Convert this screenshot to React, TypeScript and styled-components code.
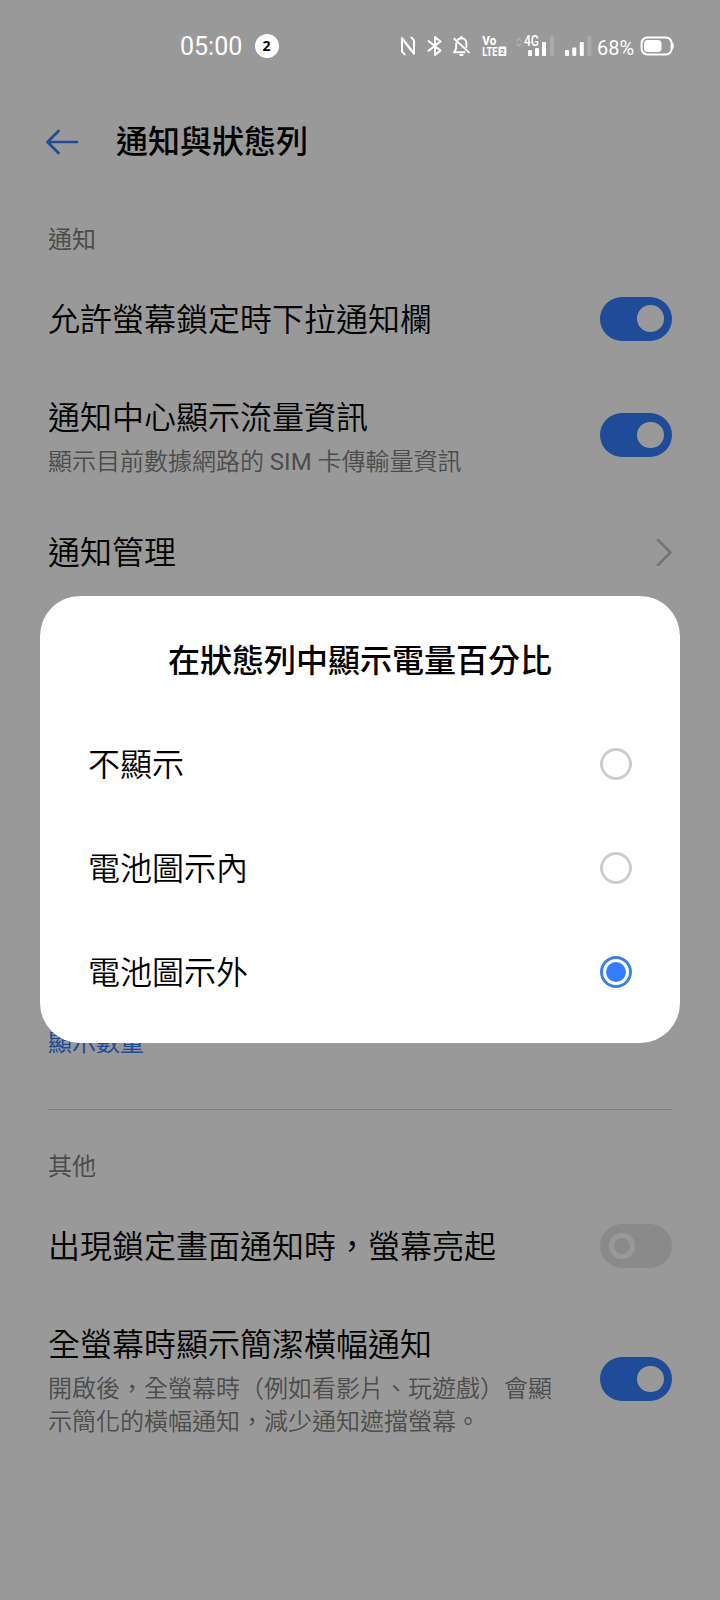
import React from "react";
import styled, { createGlobalStyle } from "styled-components";

const GlobalStyle = createGlobalStyle`
  * { box-sizing: border-box; }
  html, body { margin: 0; padding: 0; background: #fff; }
  body { font-family: Roboto, "Noto Sans CJK TC", sans-serif; color: #000; }
`;

const Screen = styled.div`
  position: relative;
  width: 720px;
  height: 1600px;
  overflow: hidden;
  background: #fff;
`;

const StatusBar = styled.header`
  position: relative;
  z-index: 2;
  display: flex;
  align-items: center;
  height: 92px;
  padding: 0 45px 0 180px;
  color: #fff;
`;

const Clock = styled.span`
  width: 74.5px;
  padding-top: 2px;
  font-size: 25px;
  line-height: 30px;
`;

const CountBadge = styled.span`
  display: flex;
  align-items: center;
  justify-content: center;
  width: 24px;
  height: 24px;
  margin-right: auto;
  border-radius: 50%;
  background: #fff;
  color: #000;
  font: 700 14px/24px "Open Sans", sans-serif;
`;

const StatusIcons = styled.div`
  display: flex;
  align-items: center;
  height: 22px;
`;

const StatusIcon = styled.svg<{ $gap?: number }>`
  display: block;
  flex: none;
  overflow: visible;
  margin-left: ${({ $gap = 0 }) => $gap}px;
`;

const BatteryLevel = styled.span`
  width: 38px;
  margin: 3px 0 0 5px;
  font-size: 20px;
  line-height: 24px;
`;

const TitleBar = styled.div`
  display: flex;
  align-items: center;
  gap: 37px;
  height: 98px;
  padding-left: 45px;
`;

const PageTitle = styled.h1`
  margin: 0;
  padding-top: 2px;
  font-size: 32px;
  line-height: 44px;
  font-weight: 500;
`;

const Section = styled.section`
  padding: 0 48px;
`;

const SectionLabel = styled.h2<{ $top: number; $bottom: number }>`
  margin: 0;
  padding: ${({ $top, $bottom }) => `${$top}px 0 ${$bottom}px`};
  font-size: 24px;
  line-height: 36px;
  font-weight: 400;
  color: #808080;
`;

const SettingRow = styled.div<{ $height: number }>`
  display: flex;
  align-items: center;
  justify-content: space-between;
  height: ${({ $height }) => $height}px;
`;

const SettingText = styled.div`
  display: flex;
  flex-direction: column;
  gap: 6px;
  max-width: 510px;
  padding-top: 2px;
`;

const SettingTitle = styled.span`
  padding-top: 2px;
  font-size: 32px;
  line-height: 44px;
  font-weight: 350;
  white-space: nowrap;
`;

const SettingNote = styled.span`
  font-size: 24px;
  line-height: 33px;
  font-weight: 350;
  color: #808080;
`;

const Latin = styled.span`
  font-weight: 400;
`;

const Track = styled.span<{ $on: boolean }>`
  display: flex;
  flex: none;
  align-items: center;
  justify-content: ${({ $on }) => ($on ? "flex-end" : "flex-start")};
  width: 72px;
  height: 44px;
  padding: 0 8.5px;
  border-radius: 22px;
  background: ${({ $on }) => ($on ? "#347dff" : "#e6e6e6")};
`;

const Knob = styled.span<{ $on: boolean }>`
  width: 26.5px;
  height: 26.5px;
  border: ${({ $on }) => ($on ? 0 : "5px solid #fff")};
  border-radius: 50%;
  background: ${({ $on }) => ($on ? "#fff" : "#e6e6e6")};
`;

const TextLink = styled.a`
  display: block;
  margin-top: 427px;
  font-size: 24px;
  line-height: 36px;
  color: #347dff;
`;

const Divider = styled.hr`
  height: 1px;
  margin: 48px 0 0;
  border: 0;
  background: #d4d4d4;
`;

const Scrim = styled.div`
  position: absolute;
  inset: 0;
  display: flex;
  justify-content: center;
  align-items: flex-start;
  padding-top: 596px;
  background: rgba(0, 0, 0, 0.4);
`;

const Dialog = styled.div`
  width: 640px;
  height: 447px;
  padding: 43px 48px 0;
  border-radius: 40px;
  background: #fff;
`;

const DialogTitle = styled.h2`
  margin: 0 0 29px;
  font-size: 32px;
  line-height: 44px;
  font-weight: 500;
  text-align: center;
`;

const Option = styled.div`
  display: flex;
  align-items: center;
  justify-content: space-between;
  height: 104px;
  font-size: 32px;
  line-height: 44px;
  font-weight: 350;
`;

const OptionLabel = styled.span`
  padding-top: 2px;
`;

const Radio = styled.span<{ $checked: boolean }>`
  display: flex;
  align-items: center;
  justify-content: center;
  width: 32px;
  height: 32px;
  border: 3px solid ${({ $checked }) => ($checked ? "#3f80e2" : "#cdcdcd")};
  border-radius: 50%;

  &::after {
    content: "";
    width: 20px;
    height: 20px;
    border-radius: 50%;
    background: ${({ $checked }) => ($checked ? "#347dff" : "transparent")};
  }
`;

const Switch = ({ on }: { on: boolean }) => (
  <Track $on={on}>
    <Knob $on={on} />
  </Track>
);

const SignalBars = ({ gap }: { gap: number }) => (
  <StatusIcon $gap={gap} width="27" height="22" viewBox="0 0 27 22" fill="#fff">
    <rect x="0" y="15" width="4" height="6" rx="1" />
    <rect x="7.3" y="12.5" width="4" height="8.5" rx="1" />
    <rect x="14.8" y="7" width="4" height="14" rx="1" />
    <rect x="22.3" y="1" width="4" height="20" rx="1" opacity="0.18" />
  </StatusIcon>
);

const options = ["不顯示", "電池圖示內", "電池圖示外"];

export default function App() {
  return (
    <Screen lang="zh-Hant">
      <GlobalStyle />
      <StatusBar>
        <Clock>05:00</Clock>
        <CountBadge>2</CountBadge>
        <StatusIcons>
          <StatusIcon width="17" height="22" viewBox="0 0 17 22" fill="none" stroke="#fff" strokeWidth="2" strokeLinecap="round" strokeLinejoin="round">
            <path d="M4.6 19.3 L2 16.8 V3.2 L12 16.2" />
            <path d="M11.4 2.6 L14 5.2 V18.8 L4 5.8" />
          </StatusIcon>
          <StatusIcon $gap={10} width="16" height="22" viewBox="0 0 16 22" fill="none" stroke="#fff" strokeWidth="2" strokeLinejoin="round" strokeLinecap="round">
            <path d="M1.5 6 L13.5 15.5 L8 20 V2 L13.5 6.5 L1.5 15.8" />
          </StatusIcon>
          <StatusIcon $gap={9} width="19" height="22" viewBox="0 0 19 22" fill="none" stroke="#fff" strokeWidth="1.9" strokeLinecap="round" strokeLinejoin="round">
            <path d="M5.4 5.2 C6.3 4 7.8 3.3 9.4 3.3 C12.3 3.3 14.4 5.4 14.4 8.5 V12 M12.6 17.2 H2 C3.6 15.6 4.2 14.2 4.2 12 V8.2" />
            <path d="M2.2 3.8 L17 17.4" />
            <path d="M9.4 1.8 V3 M8.3 20 H10.6" />
          </StatusIcon>
          <StatusIcon $gap={11} width="25" height="22" viewBox="0 0 25 22" fill="#fff" fontFamily="Roboto, sans-serif" fontWeight="800">
            <text x="0.3" y="10" fontSize="12.5" textLength="14" lengthAdjust="spacingAndGlyphs">Vo</text>
            <text x="0.3" y="21" fontSize="13" textLength="15.2" lengthAdjust="spacingAndGlyphs">LTE</text>
            <rect x="16.5" y="11.5" width="7.8" height="9.5" rx="1" />
            <text x="18.2" y="19.2" fontSize="8" fill="#888">2</text>
          </StatusIcon>
          <StatusIcon $gap={9} width="38" height="22" viewBox="0 0 38 22" fill="#fff">
            <path d="M0.8 6 L3 3.5 L5.2 6 M0.8 8.5 L3 11 L5.2 8.5" fill="none" stroke="#fff" strokeWidth="1.5" opacity="0.22" />
            <text x="8" y="11.2" fontSize="14" fontWeight="500" fontFamily="Roboto, sans-serif" textLength="15" lengthAdjust="spacingAndGlyphs">4G</text>
            <rect x="12" y="15" width="4" height="6" rx="1" />
            <rect x="19" y="13" width="4" height="8" rx="1" />
            <rect x="26" y="7" width="4" height="14" rx="1" />
            <rect x="34" y="1" width="4" height="20" rx="1" opacity="0.18" />
          </StatusIcon>
          <SignalBars gap={11} />
          <BatteryLevel>68%</BatteryLevel>
          <StatusIcon $gap={5} width="35" height="22" viewBox="0 0 35 22">
            <rect x="1.6" y="2.6" width="30" height="16.8" rx="5.5" fill="none" stroke="#fff" strokeWidth="2" />
            <rect x="4" y="5" width="17.5" height="12" rx="3.5" fill="#fff" />
            <path d="M32 7.5 C34.4 8.4 34.4 13.6 32 14.5 Z" fill="#fff" />
          </StatusIcon>
        </StatusIcons>
      </StatusBar>

      <TitleBar>
        <svg width="34" height="28" viewBox="0 0 34 28" fill="none" stroke="#347dff" strokeWidth="2.7" strokeLinecap="round" strokeLinejoin="round">
          <path d="M32 15 H2.5 M13.5 4 L2.5 15 L13.5 26" />
        </svg>
        <PageTitle>通知與狀態列</PageTitle>
      </TitleBar>

      <Section>
        <SectionLabel $top={32} $bottom={14}>通知</SectionLabel>
        <SettingRow $height={93}>
          <SettingTitle>允許螢幕鎖定時下拉通知欄</SettingTitle>
          <Switch on />
        </SettingRow>
        <SettingRow $height={140}>
          <SettingText>
            <SettingTitle>通知中心顯示流量資訊</SettingTitle>
            <SettingNote>
              顯示目前數據網路的 <Latin>SIM</Latin> 卡傳輸量資訊
            </SettingNote>
          </SettingText>
          <Switch on />
        </SettingRow>
        <SettingRow $height={93}>
          <SettingTitle>通知管理</SettingTitle>
          <svg width="16" height="28" viewBox="0 0 16 28" fill="none" stroke="#c4c4c4" strokeWidth="2.7" strokeLinecap="round" strokeLinejoin="round">
            <path d="M2 2 L14.5 14.5 L2 27" />
          </svg>
        </SettingRow>
        <TextLink>顯示數量</TextLink>
        <Divider />
      </Section>

      <Section>
        <SectionLabel $top={39} $bottom={15}>其他</SectionLabel>
        <SettingRow $height={92}>
          <SettingTitle>出現鎖定畫面通知時，螢幕亮起</SettingTitle>
          <Switch on={false} />
        </SettingRow>
        <SettingRow $height={174}>
          <SettingText>
            <SettingTitle>全螢幕時顯示簡潔橫幅通知</SettingTitle>
            <SettingNote>開啟後，全螢幕時（例如看影片、玩遊戲）會顯示簡化的橫幅通知，減少通知遮擋螢幕。</SettingNote>
          </SettingText>
          <Switch on />
        </SettingRow>
      </Section>

      <Scrim>
        <Dialog role="dialog">
          <DialogTitle>在狀態列中顯示電量百分比</DialogTitle>
          {options.map((label, i) => (
            <Option key={label}>
              <OptionLabel>{label}</OptionLabel>
              <Radio $checked={i === 2} />
            </Option>
          ))}
        </Dialog>
      </Scrim>
    </Screen>
  );
}
